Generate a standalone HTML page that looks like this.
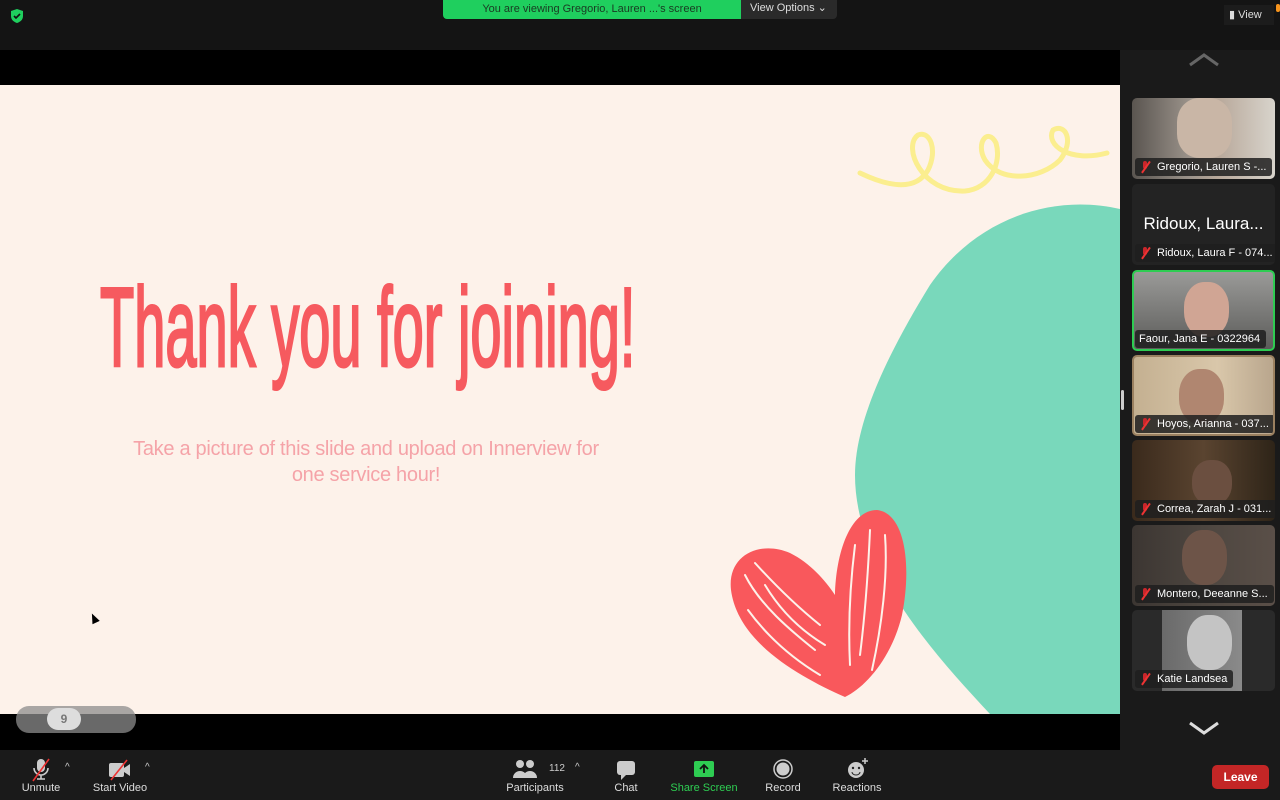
<!DOCTYPE html>
<html><head><meta charset="utf-8"><style>
*{margin:0;padding:0;box-sizing:border-box}
body{width:1280px;height:800px;background:#141414;position:relative;overflow:hidden;font-family:"Liberation Sans",sans-serif}
.abs{position:absolute}
.banner{left:443px;top:0;width:298px;height:19px;background:#1fcf5e;color:#1a3a22;font-size:11px;text-align:center;line-height:19px;border-radius:0 0 0 4px}
.vopt{left:741px;top:0;width:96px;height:19px;background:#2a2a2a;color:#ddd;font-size:11px;line-height:17px;padding-left:9px;border-radius:0 0 4px 0}
.tile{position:absolute;left:1132px;width:143px;height:81px;border-radius:5px;overflow:hidden;background:#232323}
.lab{position:absolute;left:3px;bottom:3px;height:18px;background:rgba(30,30,30,.85);border-radius:3px;color:#fff;font-size:11px;line-height:18px;padding:0 6px 0 22px;white-space:nowrap}
.lab i{position:absolute;left:5px;top:3px;width:10px;height:12px}
.lab i:before{content:"";position:absolute;left:3px;top:0;width:4px;height:8px;border-radius:2px;background:#c9262b}
.lab i:after{content:"";position:absolute;left:5px;top:-1px;width:1.5px;height:14px;background:#e33;transform:rotate(35deg)}
.tb{position:absolute;top:750px;height:50px;text-align:center;color:#ddd;font-size:11px}
.tb span{position:absolute;bottom:6px;left:0;right:0;white-space:nowrap}
</style></head><body>
<div class="abs" style="left:10px;top:8px;width:14px;height:16px"><svg width="14" height="16"><path d="M7 1L13 3V8C13 12 10 14 7 15C4 14 1 12 1 8V3Z" fill="#1fcf5e"/><path d="M4 8l2 2 4-4" stroke="#111" stroke-width="1.6" fill="none"/></svg></div>
<div class="abs banner">You are viewing Gregorio, Lauren ...'s screen</div>
<div class="abs vopt">View Options ⌄</div>
<div class="abs" style="left:1224px;top:5px;width:50px;height:20px;background:#1c1c1c;color:#ddd;font-size:11px;line-height:20px;padding-left:5px">▮ View</div>
<div class="abs" style="left:1276px;top:4px;width:4px;height:8px;background:#f7941d;border-radius:2px"></div>
<div class="abs" style="left:0;top:50px;width:1120px;height:700px;background:#000"></div>
<div class="abs" style="left:0;top:85px;width:1120px;height:629px;background:#fdf2ea;overflow:hidden">
<svg class="abs" style="left:0;top:0" width="1120" height="629">
<path d="M1120,124 C1050,108 975,135 930,200 C890,265 855,335 855,390 C855,480 930,565 990,629 L1120,629 Z" fill="#79d8bb"/>
<path d="M860,88 C885,100 915,108 928,85 C938,65 930,45 918,50 C902,62 922,108 965,106 C990,104 1002,78 996,58 C988,42 975,58 985,75 C1000,98 1040,95 1060,75 C1075,55 1065,38 1053,45 C1045,60 1070,78 1107,68" stroke="#fbee8f" stroke-width="5" fill="none" stroke-linecap="round"/>
<path d="M845,612 C800,592 738,558 731,505 C727,470 760,455 790,468 C810,478 825,495 835,510 C836,468 850,425 877,425 C905,428 912,480 902,530 C892,572 866,602 845,612 Z" fill="#f9585c"/>
<g stroke="#fdf2ea" stroke-width="2" fill="none" stroke-linecap="round">
<path d="M745,490 C760,520 790,545 815,565"/>
<path d="M755,478 C775,500 795,520 820,540"/>
<path d="M765,500 C780,525 800,545 825,560"/>
<path d="M855,460 C850,500 848,540 850,580"/>
<path d="M870,445 C868,490 865,530 860,570"/>
<path d="M885,450 C888,490 882,540 872,585"/>
<path d="M748,525 C770,555 795,575 820,590"/>
</g>
</svg>
<div class="abs" style="left:100px;top:178px;white-space:nowrap;color:#f65a5f;font-family:'Liberation Sans Narrow','Liberation Sans',sans-serif;font-size:112px;line-height:130px;transform:scaleX(0.5);transform-origin:0 0;-webkit-text-stroke:3px #f65a5f">Thank you for joining!</div>
<div class="abs" style="left:86px;top:351px;width:560px;text-align:center;color:#f5a3a8;font-size:20px;line-height:26px;letter-spacing:-0.3px">Take a picture of this slide and upload on Innerview for<br>one service hour!</div>
<div class="abs" style="left:90px;top:528px;width:0;height:0;border-left:4px solid transparent;border-right:4px solid transparent;border-bottom:10px solid #000;transform:rotate(-25deg)"></div>
</div>
<div class="abs" style="left:16px;top:706px;width:120px;height:27px;background:rgba(140,140,140,.75);border-radius:13px"></div>
<div class="abs" style="left:47px;top:708px;width:34px;height:22px;background:#ddd;border-radius:11px;color:#777;font-size:12px;text-align:center;line-height:22px;font-weight:bold">9</div>
<div class="abs" style="left:1120px;top:50px;width:160px;height:700px;background:#1a1a1a"></div>
<svg class="abs" style="left:1188px;top:52px" width="32" height="16"><path d="M2 13L16 3L30 13" stroke="#666" stroke-width="3" fill="none"/></svg>
<svg class="abs" style="left:1188px;top:720px" width="32" height="16"><path d="M2 3L16 13L30 3" stroke="#ddd" stroke-width="3" fill="none"/></svg>
<div class="abs" style="left:1121px;top:390px;width:3px;height:20px;background:#ccc;border-radius:2px"></div>
<div class="tile" style="top:98px;background:linear-gradient(90deg,#5a5550,#9a928a 40%,#b8a89a 60%,#d8d4cc)"><div class="abs" style="left:45px;top:0;width:55px;height:60px;background:#c9b6a6;border-radius:40%"></div><div class="lab"><i></i>Gregorio, Lauren S -...</div></div>
<div class="tile" style="top:184px"><div class="abs" style="left:0;top:30px;width:143px;text-align:center;color:#fff;font-size:17px">Ridoux, Laura...</div><div class="lab"><i></i>Ridoux, Laura F - 074...</div></div>
<div class="tile" style="top:270px;background:linear-gradient(#9a9a98,#5c5c5a);border:2px solid #2ecc52"><div class="abs" style="left:50px;top:10px;width:45px;height:55px;background:#d0a594;border-radius:45%"></div><div class="lab" style="padding-left:4px;left:1px;bottom:1px">Faour, Jana E - 0322964</div></div>
<div class="tile" style="top:355px;background:linear-gradient(90deg,#c4b091,#d9c7aa 60%,#b9a68d);border:2px solid #9a8060"><div class="abs" style="left:45px;top:12px;width:45px;height:55px;background:#b08670;border-radius:45%"></div><div class="lab" style="left:1px;bottom:1px"><i></i>Hoyos, Arianna - 037...</div></div>
<div class="tile" style="top:440px;background:linear-gradient(90deg,#3a2a1c,#5a4430,#2e2418)"><div class="abs" style="left:60px;top:20px;width:40px;height:45px;background:#6b4f40;border-radius:45%"></div><div class="lab"><i></i>Correa, Zarah J - 031...</div></div>
<div class="tile" style="top:525px;background:linear-gradient(90deg,#3c3632,#4d4640,#5a4f48)"><div class="abs" style="left:50px;top:5px;width:45px;height:55px;background:#6d5448;border-radius:45%"></div><div class="lab"><i></i>Montero, Deeanne S...</div></div>
<div class="tile" style="top:610px;background:linear-gradient(90deg,#2a2a2a 30px,#6a6a6a 30px,#8a8a8a 110px,#2a2a2a 110px)"><div class="abs" style="left:55px;top:5px;width:45px;height:55px;background:#c4c4c4;border-radius:45%"></div><div class="lab"><i></i>Katie Landsea</div></div>
<div class="abs" style="left:0;top:750px;width:1280px;height:50px;background:#1a1a1a"></div>
<div class="tb" style="left:16px;width:50px"><svg width="24" height="26" style="margin-top:7px"><rect x="8" y="2" width="8" height="13" rx="4" fill="#ccc"/><path d="M5 11a7 7 0 0 0 14 0M12 18v4M8 22h8" stroke="#ccc" stroke-width="1.6" fill="none"/><path d="M4 24L20 2" stroke="#e33" stroke-width="1.6"/></svg><span>Unmute</span></div>
<div class="abs" style="left:65px;top:762px;color:#ccc;font-size:10px">^</div>
<div class="tb" style="left:88px;width:64px"><svg width="26" height="24" style="margin-top:8px"><rect x="2" y="5" width="15" height="14" rx="2" fill="#ccc"/><path d="M17 10l6-4v12l-6-4z" fill="#ccc"/><path d="M4 22L20 2" stroke="#e33" stroke-width="1.6"/></svg><span>Start Video</span></div>
<div class="abs" style="left:145px;top:762px;color:#ccc;font-size:10px">^</div>
<div class="tb" style="left:500px;width:70px"><svg width="28" height="22" style="margin-top:8px;margin-left:-20px"><circle cx="9" cy="6" r="4" fill="#ccc"/><circle cx="19" cy="6" r="4" fill="#ccc"/><path d="M2 20a7 7 0 0 1 14 0zM12 20a7 7 0 0 1 14 0z" fill="#ccc"/></svg><span>Participants</span></div>
<div class="abs" style="left:549px;top:763px;color:#ccc;font-size:10px">112</div>
<div class="abs" style="left:575px;top:762px;color:#ccc;font-size:10px">^</div>
<div class="tb" style="left:606px;width:40px"><svg width="22" height="22" style="margin-top:9px"><rect x="2" y="2" width="18" height="14" rx="3" fill="#ccc"/><path d="M6 16l0 5 5-5z" fill="#ccc"/></svg><span>Chat</span></div>
<div class="tb" style="left:668px;width:72px;color:#2ecc52"><svg width="22" height="18" style="margin-top:10px"><rect x="1" y="1" width="20" height="16" rx="2" fill="#2ecc52"/><path d="M11 13V5M7 9l4-4 4 4" stroke="#111" stroke-width="1.8" fill="none"/></svg><span>Share Screen</span></div>
<div class="tb" style="left:762px;width:42px"><svg width="22" height="22" style="margin-top:8px"><circle cx="11" cy="11" r="9" stroke="#ccc" stroke-width="1.5" fill="none"/><circle cx="11" cy="11" r="6.5" fill="#ccc"/></svg><span>Record</span></div>
<div class="tb" style="left:828px;width:58px"><svg width="24" height="24" style="margin-top:7px"><circle cx="11" cy="13" r="8" fill="#ccc"/><circle cx="8" cy="11" r="1.2" fill="#222"/><circle cx="14" cy="11" r="1.2" fill="#222"/><path d="M7 15a4 3 0 0 0 8 0" stroke="#222" fill="none"/><path d="M20 1v6M17 4h6" stroke="#ccc" stroke-width="1.5"/></svg><span>Reactions</span></div>
<div class="abs" style="left:1212px;top:765px;width:57px;height:24px;background:#c32626;border-radius:5px;color:#fff;font-size:12px;font-weight:bold;text-align:center;line-height:24px">Leave</div>
</body></html>
